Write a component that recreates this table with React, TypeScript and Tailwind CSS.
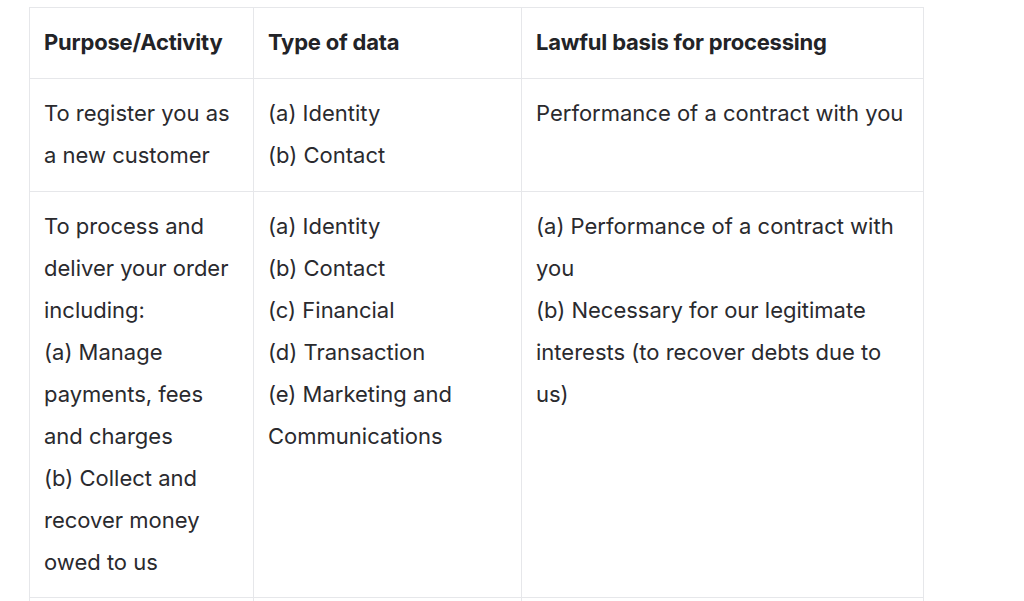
import React from "react";

const header = ["Purpose/Activity", "Type of data", "Lawful basis for processing"];

const rows: string[][][] = [
  [
    ["To register you as", "a new customer"],
    ["(a) Identity", "(b) Contact"],
    ["Performance of a contract with you"],
  ],
  [
    [
      "To process and",
      "deliver your order",
      "including:",
      "(a) Manage",
      "payments, fees",
      "and charges",
      "(b) Collect and",
      "recover money",
      "owed to us",
    ],
    [
      "(a) Identity",
      "(b) Contact",
      "(c) Financial",
      "(d) Transaction",
      "(e) Marketing and",
      "Communications",
    ],
    [
      "(a) Performance of a contract with",
      "you",
      "(b) Necessary for our legitimate",
      "interests (to recover debts due to",
      "us)",
    ],
  ],
];

const widths = ["w-[224px]", "w-[268px]", "w-[402px]"];

export default function App() {
  return (
    <div className="h-[601px] overflow-hidden bg-white pl-[29px] pt-[7px] font-['Inter',sans-serif] text-[22px] leading-[42px] text-[#2a2a2e]">
      <div className="flex w-[895px] flex-col border-l border-t border-[#e6e7ea]">
        <div className="flex">
          {header.map((h, i) => (
            <div
              key={h}
              className={`${widths[i]} shrink-0 border-b border-r border-[#e6e7ea] px-[14px] pb-[15px] pt-[13px] font-bold tracking-[-0.2px] text-[#222327]`}
            >
              <div className="whitespace-nowrap">{h}</div>
            </div>
          ))}
        </div>
        {rows.map((r, ri) => (
          <div key={ri} className="flex">
            {r.map((lines, ci) => (
              <div
                key={ci}
                className={`${widths[ci]} shrink-0 border-b border-r border-[#e6e7ea] px-[14px] pt-[13px] ${ri === 0 ? "pb-[15px]" : "pb-[14px]"}`}
              >
                {lines.map((l, li) => (
                  <div key={li} className="whitespace-nowrap">
                    {l}
                  </div>
                ))}
              </div>
            ))}
          </div>
        ))}
        <div className="flex h-[40px]">
          {widths.map((w) => (
            <div key={w} className={`${w} shrink-0 border-r border-[#e6e7ea]`} />
          ))}
        </div>
      </div>
    </div>
  );
}
